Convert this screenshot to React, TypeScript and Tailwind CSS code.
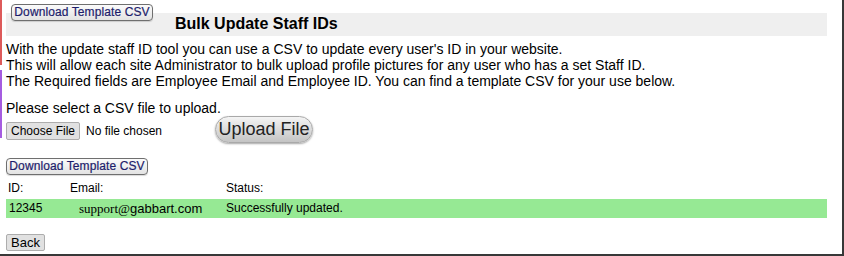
import React from 'react';

const TemplateButton: React.FC<{ className?: string }> = ({ className = '' }) => (
  <button
    type="button"
    className={`h-[17px] w-[142px] rounded-[4px] border border-[#6f6f6f] bg-gradient-to-b from-[#fbfbfb] to-[#e3e3e3] text-[12px] leading-[15px] tracking-[0.1px] text-[#1d1d6b] shadow-[0_1px_1px_rgba(0,0,0,0.15)] [-webkit-text-stroke:0.2px_#1d1d6b] ${className}`}
  >
    Download Template CSV
  </button>
);

const App: React.FC = () => {
  return (
    <div className="flex h-[256px] w-[844px] border-r-2 border-b-2 border-[#383838] bg-white font-['Liberation_Sans',Arial,sans-serif] text-black">
      {/* stray window edges on the left */}
      <div className="flex w-[2px] flex-col gap-[5px]">
        <div className="h-[65px] bg-[#dd5a5a]" />
        <div className="h-[68px] bg-[#a55ce0]" />
      </div>

      <div className="flex w-[825px] flex-col pl-[4px] pt-[13px]">
        {/* header */}
        <div className="flex h-[24px] items-start bg-[#efefef]">
          <TemplateButton className="ml-[5px] -mt-[9px] h-[16px]" />
          <h1 className="ml-[22px] text-[16px] font-bold leading-[22px]">Bulk Update Staff IDs</h1>
        </div>

        <p className="mt-[5px] text-[14px] leading-[16px]">
          With the update staff ID tool you can use a CSV to update every user's ID in your website.
          <br />
          This will allow each site Administrator to bulk upload profile pictures for any user who has a set Staff ID.
          <br />
          The Required fields are Employee Email and Employee ID. You can find a template CSV for your use below.
        </p>

        <p className="mt-[11px] text-[14px] leading-[16px]">Please select a CSV file to upload.</p>

        <div className="flex items-start">
          <div className="mt-[6px] flex items-center">
            <button
              type="button"
              className="h-[18px] w-[74px] rounded-[2px] border border-[#adadad] bg-[#e1e1e1] text-[12px] leading-[16px]"
            >
              Choose File
            </button>
            <span className="ml-[6px] text-[12px]">No file chosen</span>
          </div>
          <button
            type="button"
            className="ml-[53px] h-[27px] w-[98px] rounded-full border border-[#a9a9a9] bg-gradient-to-b from-[#f4f4f4] via-[#dcdcdc] to-[#c4c4c4] text-[18px] leading-[24px] text-[#222] shadow-[0_1px_2px_rgba(0,0,0,0.35)]"
          >
            Upload File
          </button>
        </div>

        <TemplateButton className="mt-[15px]" />

        <div className="mt-[4px] flex text-[12px] leading-[18px]">
          <span className="w-[64px] pl-[2px]">ID:</span>
          <span className="w-[156px]">Email:</span>
          <span>Status:</span>
        </div>

        <div className="mt-[2px] flex h-[20px] items-center bg-[#96e994] text-[12px]">
          <span className="w-[64px] pl-[3px]">12345</span>
          <span className="w-[156px] pl-[9px] text-[13px]">
            <span className="font-['Liberation_Serif',serif]">support@</span>gabbart.com
          </span>
          <span>Successfully updated.</span>
        </div>

        <div className="mt-[12px]">
          <button
            type="button"
            className="h-[17px] w-[39px] rounded-[2px] border border-[#adadad] bg-[#e1e1e1] text-[13px] leading-[15px]"
          >
            Back
          </button>
        </div>
      </div>
    </div>
  );
};

export default App;
